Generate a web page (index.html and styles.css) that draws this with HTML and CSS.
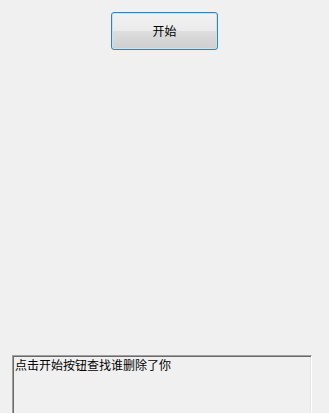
FILE: index.html
```html
<!DOCTYPE html>
<html lang="zh-CN">
<head>
<meta charset="utf-8">
<link rel="stylesheet" href="styles.css">
</head>
<body>
<div class="app">
  <div class="top">
    <button class="start-btn">开始</button>
  </div>
  <div class="spacer"></div>
  <div class="log">点击开始按钮查找谁删除了你</div>
</div>
</body>
</html>
```
FILE: styles.css
```css
html, body {
  margin: 0;
  padding: 0;
  background: #f0f0f0;
  overflow: hidden;
}
.app {
  width: 329px;
  height: 413px;
  display: flex;
  flex-direction: column;
  font-family: "Noto Sans CJK SC", "Noto Sans", sans-serif;
  font-size: 12px;
  color: #000;
}
.top {
  padding-top: 12px;
  padding-left: 111px;
  display: flex;
}
.start-btn {
  width: 107px;
  height: 38px;
  box-sizing: border-box;
  border: 1px solid #3c7fb1;
  border-radius: 3px;
  box-shadow: inset 0 0 0 1px #bde6fb;
  background: linear-gradient(to bottom, #f1f1f1 0%, #ebebeb 50%, #dddddd 51%, #cfcfcf 100%);
  font-family: "Noto Sans CJK SC", sans-serif;
  font-size: 12px;
  color: #000;
  padding: 0;
  line-height: 1;
}
.spacer {
  flex: 1;
}
.log {
  margin-left: 12px;
  width: 300px;
  height: 62px;
  box-sizing: border-box;
  margin-bottom: -4px;
  border-top: 1px solid #a0a0a0;
  border-left: 1px solid #a0a0a0;
  border-right: 1px solid #ffffff;
  border-bottom: 1px solid #ffffff;
  box-shadow: inset 1px 1px 0 #696969, inset -1px -1px 0 #e3e3e3;
  background: #f0f0f0;
  padding: 2px 0 0 2px;
  line-height: 14px;
}
```
